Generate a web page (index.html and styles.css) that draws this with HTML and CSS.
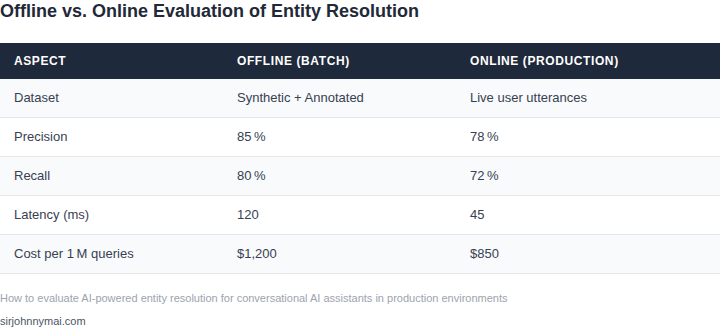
FILE: index.html
```html
<!DOCTYPE html>
<html>
<head>
<meta charset="utf-8">
<link rel="stylesheet" href="styles.css">
</head>
<body>
<div class="page">
  <h2 class="title">Offline vs. Online Evaluation of Entity Resolution</h2>
  <table class="cmp">
    <thead>
      <tr><th class="c1">Aspect</th><th class="c2">Offline (Batch)</th><th>Online (Production)</th></tr>
    </thead>
    <tbody>
      <tr><td>Dataset</td><td>Synthetic + Annotated</td><td>Live user utterances</td></tr>
      <tr><td>Precision</td><td>85&#8239;%</td><td>78&#8239;%</td></tr>
      <tr><td>Recall</td><td>80&#8239;%</td><td>72&#8239;%</td></tr>
      <tr><td>Latency (ms)</td><td>120</td><td>45</td></tr>
      <tr><td>Cost per 1&#8239;M queries</td><td>$1,200</td><td>$850</td></tr>
    </tbody>
  </table>
  <p class="caption">How to evaluate AI-powered entity resolution for conversational AI assistants in production environments</p>
  <p class="source">sirjohnnymai.com</p>
</div>
</body>
</html>
```

FILE: styles.css
```css
html, body {
  margin: 0;
  padding: 0;
  background: #ffffff;
}
body {
  font-family: "Liberation Sans", Arial, sans-serif;
  color: #374151;
}
.title {
  margin: 0 0 21px;
  font-size: 18px;
  line-height: 22px;
  font-weight: 700;
  color: #1f2937;
}
.cmp {
  width: 100%;
  border-collapse: collapse;
  table-layout: fixed;
}
.cmp th {
  background: #1e293b;
  color: #ffffff;
  font-size: 12px;
  font-weight: 700;
  text-transform: uppercase;
  letter-spacing: 0.6px;
  text-align: left;
  padding: 0 14px;
  height: 36px;
  line-height: 14px;
}
.cmp th.c1 { width: 195px; }
.cmp th.c2 { width: 205px; }
.cmp td {
  font-size: 13px;
  line-height: 18px;
  padding: 10px 14px;
  border-bottom: 1px solid #e5e7eb;
  color: #374151;
}
.cmp tbody tr:nth-child(odd) td {
  background: #f8fafc;
}
.caption {
  margin: 16px 0 0;
  font-size: 11px;
  line-height: 16px;
  color: #9ca3af;
}
.source {
  margin: 7px 0 0;
  font-size: 11px;
  line-height: 16px;
  color: #4b5563;
}
```
